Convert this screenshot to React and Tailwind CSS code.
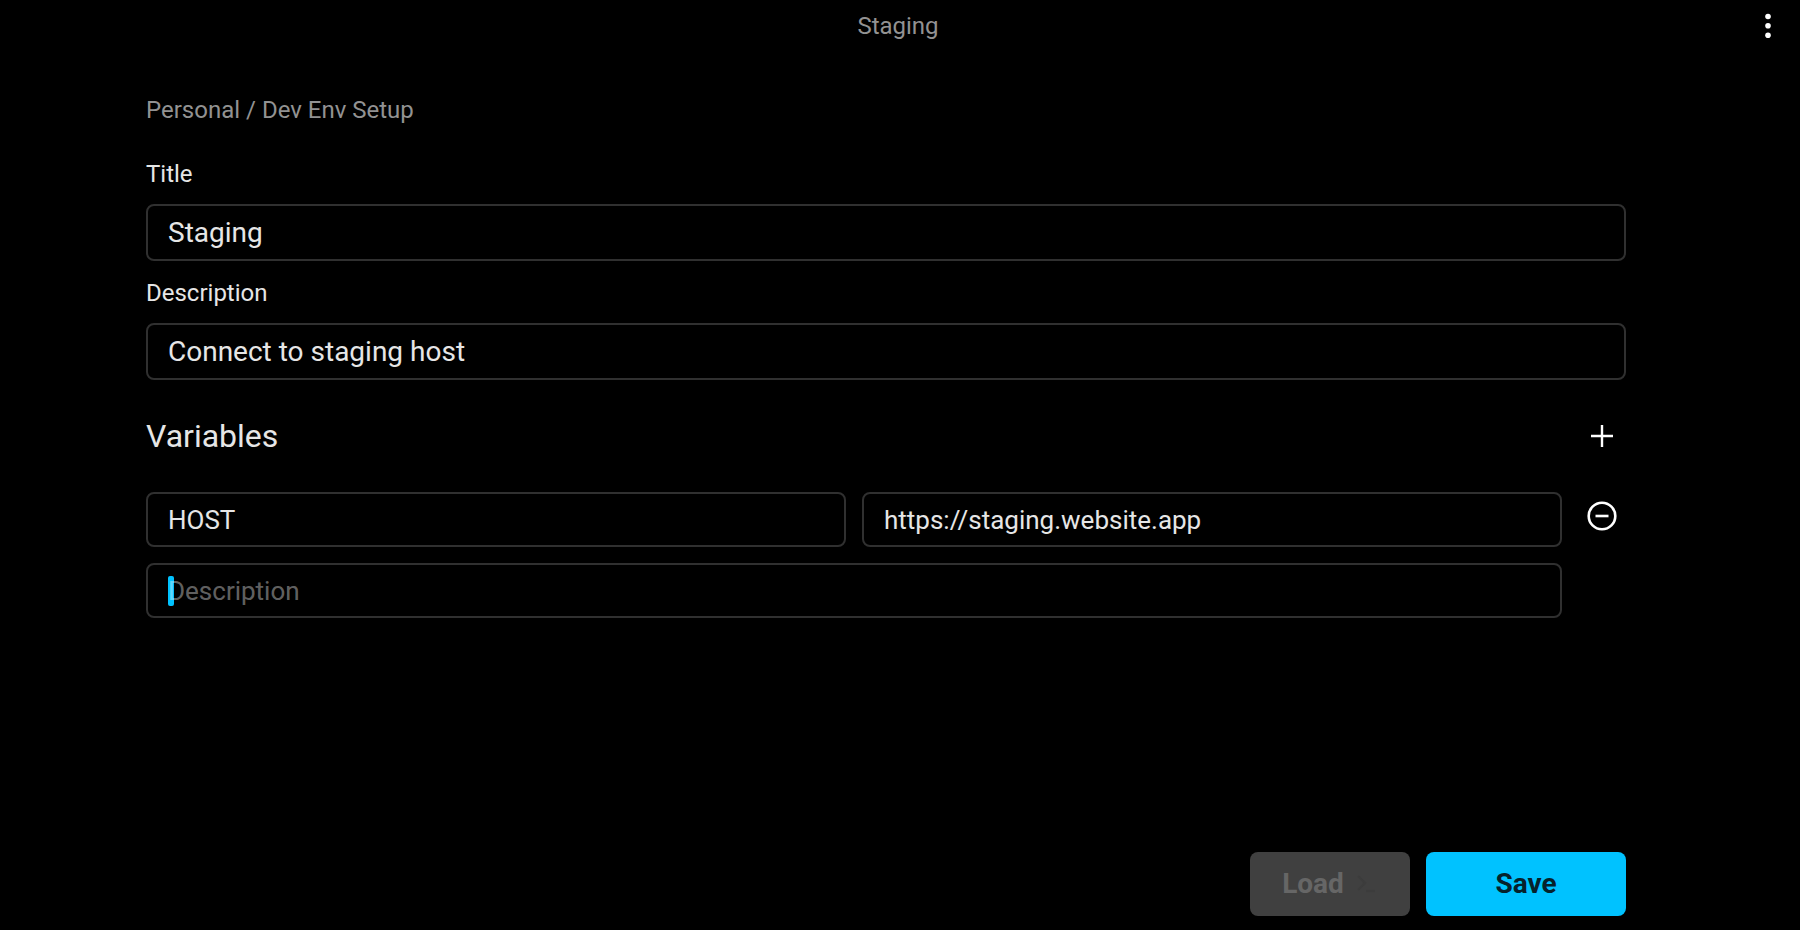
import { useState } from "react";

const fieldClass = "w-full rounded-lg border-2 border-[#303030] bg-transparent px-5 text-[#e6e6e6] outline-0 placeholder:text-white/40";

function Field({ id, label, value, onChange }) {
    return (
        <div className="flex flex-col gap-3.5">
            <label htmlFor={id} className="text-2xl">{label}</label>
            <input
                id={id}
                type="text"
                value={value}
                onChange={e => onChange(e.target.value)}
                className={`${fieldClass} h-[57px] text-[28px]`}
            />
        </div>
    );
}

function VariableRow({ variable, onChange, onRemove }) {
    return (
        <div className="flex items-start gap-4">
            <div className="grid flex-1 grid-cols-2 gap-4">
                <input
                    type="text"
                    aria-label="Name"
                    value={variable.name}
                    onChange={e => onChange({ ...variable, name: e.target.value })}
                    className={`${fieldClass} h-[55px] text-[26px]`}
                />
                <input
                    type="text"
                    aria-label="Value"
                    value={variable.value}
                    onChange={e => onChange({ ...variable, value: e.target.value })}
                    className={`${fieldClass} h-[55px] text-[26px]`}
                />
                <div className="relative col-span-2">
                    {/* block caret, sits under the placeholder */}
                    <span className="absolute top-[13px] left-[22px] h-[30px] w-1.5 rounded-xs bg-[#00c2ff]" />
                    <input
                        type="text"
                        aria-label="Variable description"
                        placeholder="Description"
                        value={variable.description}
                        onChange={e => onChange({ ...variable, description: e.target.value })}
                        className={`${fieldClass} relative block h-[55px] text-[26px] caret-transparent`}
                    />
                </div>
            </div>
            <button type="button" aria-label="Remove variable" onClick={onRemove} className="flex size-12 items-center justify-center">
                <svg width="32" height="32" viewBox="0 0 32 32" fill="none" stroke="white">
                    <circle cx="16" cy="16" r="13.3" strokeWidth="2.6" />
                    <path d="M9.5 16h13" strokeWidth="2.6" />
                </svg>
            </button>
        </div>
    );
}

function App() {

    const [title, setTitle] = useState("Staging");
    const [description, setDescription] = useState("Connect to staging host");
    const [variables, setVariables] = useState([
        { id: 1, name: "HOST", value: "https://staging.website.app", description: "" },
    ]);

    const addVariable = () => {
        setVariables([...variables, { id: Date.now(), name: "", value: "", description: "" }]);
    }

    const updateVariable = (next) => {
        setVariables(variables.map((v) => (v.id === next.id ? next : v)));
    }

    return (
        <div className="flex min-h-screen flex-col bg-black font-[Roboto,sans-serif] text-[#e6e6e6]">
            <header className="grid grid-cols-[1fr_auto_1fr] items-center py-1 pr-5 pl-4">
                <h1 className="col-start-2 text-2xl text-[#929292]">{title}</h1>
                <button type="button" aria-label="More" className="flex h-11 w-6 items-center justify-center justify-self-end">
                    <svg width="8" height="28" viewBox="0 0 8 28" fill="white">
                        <circle cx="4" cy="4.5" r="2.8" />
                        <circle cx="4" cy="13.8" r="2.8" />
                        <circle cx="4" cy="23.2" r="2.8" />
                    </svg>
                </button>
            </header>

            <main className="flex flex-1 flex-col pt-[42px] pr-[174px] pb-3.5 pl-[146px]">
                <p className="text-2xl text-[#929292]">Personal / Dev Env Setup</p>

                <div className="mt-8 flex flex-col gap-4">
                    <Field id="title" label="Title" value={title} onChange={setTitle} />
                    <Field id="description" label="Description" value={description} onChange={setDescription} />
                </div>

                <div className="mt-8 flex items-center justify-between">
                    <h2 className="text-[32px]">Variables</h2>
                    <button type="button" aria-label="Add variable" onClick={addVariable} className="flex h-11 w-12 items-center justify-center">
                        <svg width="24" height="24" viewBox="0 0 24 24" stroke="white" strokeWidth="2.4">
                            <path d="M12 1v22M1 12h22" />
                        </svg>
                    </button>
                </div>

                <div className="mt-8 flex flex-col gap-6">
                    {
                        variables.map((v) => (
                            <VariableRow
                                key={v.id}
                                variable={v}
                                onChange={updateVariable}
                                onRemove={() => setVariables(variables.filter((x) => x.id !== v.id))}
                            />
                        ))
                    }
                </div>

                <div className="mt-auto flex justify-end gap-4 text-[28px] font-bold">
                    <button type="button" disabled className="flex h-16 w-40 items-center justify-center gap-3 rounded-lg bg-[#404040] text-[#666666]">
                        Load
                        <svg width="22" height="22" viewBox="0 0 22 22" fill="none" stroke="#3c3c3c" strokeWidth="2.4">
                            <path d="M2 3l7 7-7 7M10 18h9" />
                        </svg>
                    </button>
                    <button type="button" className="h-16 w-[200px] rounded-lg bg-[#00c2ff] text-[#06222c]">Save</button>
                </div>
            </main>
        </div>
    );
}

export default App;
